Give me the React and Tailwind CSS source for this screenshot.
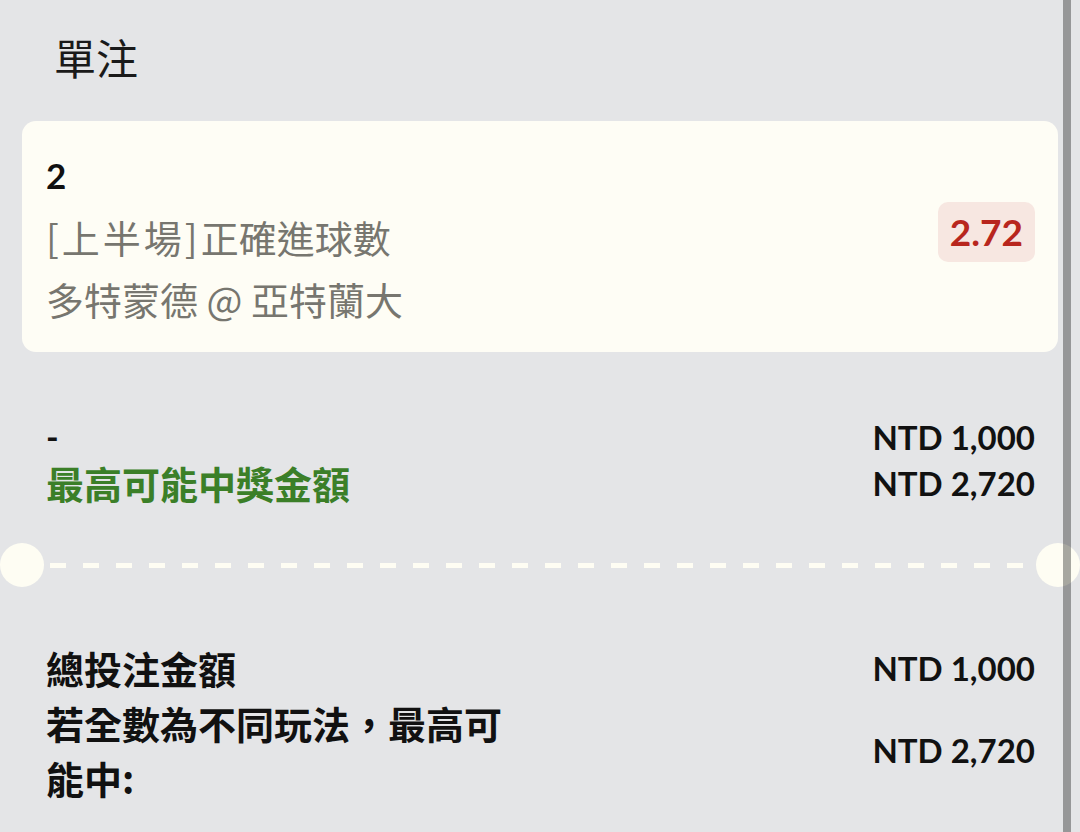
import React from "react";

const cjk = "font-['Noto_Sans_CJK_TC','Noto_Sans',sans-serif]";
const latin = "font-['Lato','Noto_Sans_CJK_TC',sans-serif]";

const AmountRow = ({ label, value, labelClass = "", rowClass = "" }) => (
  <div className={`flex items-center justify-between ${rowClass}`}>
    <div className={labelClass}>{label}</div>
    <div className={`${latin} text-[33px] font-bold text-[#111] leading-[46px]`}>
      {value}
    </div>
  </div>
);

const App = () => {
  const bet = {
    selection: "2",
    period: "[上半場]",
    market: "正確進球數",
    match: "多特蒙德 @ 亞特蘭大",
    odds: "2.72",
  };

  return (
    <div className="relative h-[832px] w-[1080px] overflow-hidden bg-[#e4e5e7]">
      {/* header */}
      <div className={`${cjk} flex h-[112px] items-center pl-[54px] text-[42px] text-[#1a1a1a]`}>
        單注
      </div>

      {/* bet card */}
      <div className="mx-[22px] mt-[9px] flex h-[231px] items-center justify-between rounded-[14px] bg-[#fefdf5] pl-[24px] pr-[23px]">
        <div className="flex flex-col">
          <div className={`${latin} text-[35px] font-bold leading-[62px] text-[#111]`}>
            {bet.selection}
          </div>
          <div className={`${cjk} text-[38px] leading-[62px] text-[#77766f]`}>
            <span className="tracking-[3px]">{bet.period}</span>
            {bet.market}
          </div>
          <div className={`${cjk} text-[38px] leading-[62px] text-[#77766f]`}>
            {bet.match}
          </div>
        </div>
        <div className={`${latin} -mt-[9px] rounded-[10px] bg-[#f7e7e1] px-[12px] text-[37px] font-bold leading-[60px] text-[#b8261d]`}>
          {bet.odds}
        </div>
      </div>

      {/* stake and payout */}
      <div className="mt-[62px] px-[46px] pr-[45px]">
        <AmountRow
          label="-"
          value="NTD 1,000"
          labelClass={`${latin} text-[34px] font-bold leading-[46px] text-[#111]`}
        />
        <AmountRow
          label="最高可能中獎金額"
          value="NTD 2,720"
          labelClass={`${cjk} text-[38px] font-bold leading-[46px] text-[#3b7f28]`}
        />
      </div>

      {/* ticket divider */}
      <div className="mt-[37px] flex items-center">
        <div className="h-[44px] w-[44px] shrink-0 rounded-full bg-[#fefdf3]" />
        <div className="mx-[6px] h-[5px] flex-1 bg-[repeating-linear-gradient(to_right,#fefdf3_0_16px,transparent_16px_33px)]" />
        <div className="h-[44px] w-[44px] shrink-0 rounded-full bg-[#fefdf3]" />
      </div>

      {/* totals */}
      <div className="mt-[53px] px-[46px] pr-[45px]">
        <AmountRow
          label="總投注金額"
          value="NTD 1,000"
          labelClass={`${cjk} text-[38px] font-bold leading-[55px] text-[#111]`}
        />
        <AmountRow
          label="若全數為不同玩法，最高可能中:"
          value="NTD 2,720"
          labelClass={`${cjk} w-[470px] text-[38px] font-bold leading-[55px] text-[#111]`}
        />
      </div>

      {/* scroll indicator */}
      <div className="absolute bottom-0 left-[1063px] top-0 w-[8px] bg-black/[0.34]" />
    </div>
  );
};

export default App;
